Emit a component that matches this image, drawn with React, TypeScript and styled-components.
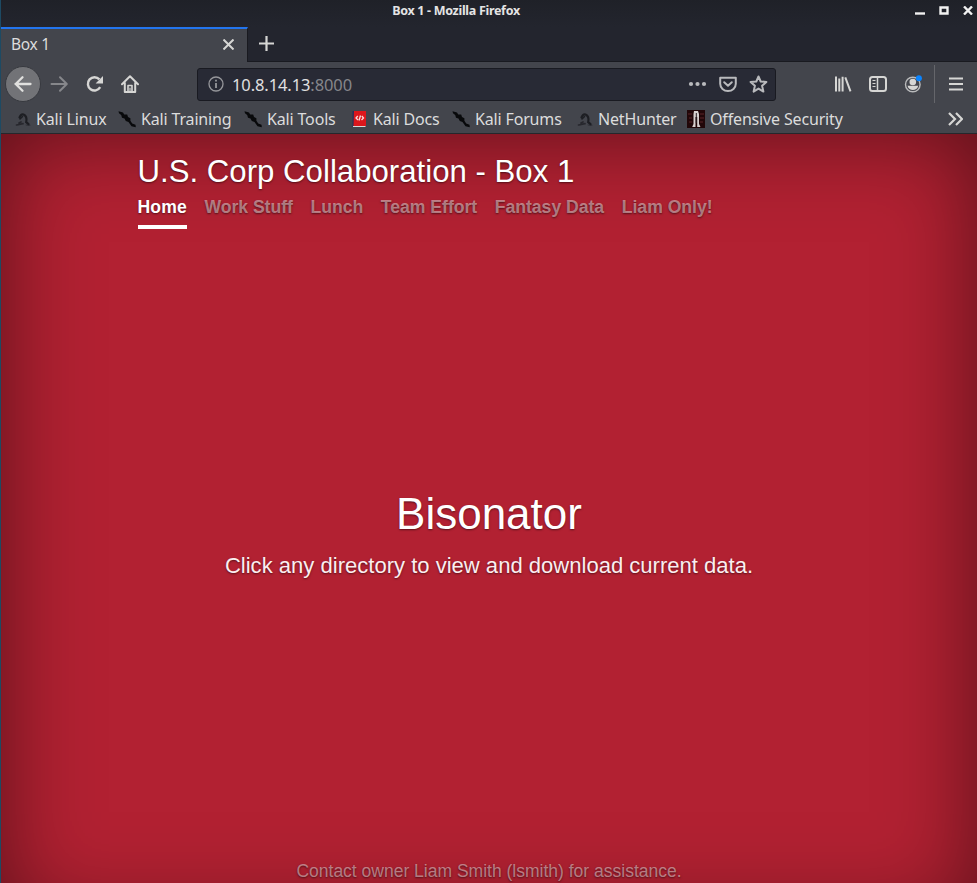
import React from "react";
import styled, { createGlobalStyle } from "styled-components";

const GlobalStyle = createGlobalStyle`
  * { box-sizing: border-box; }
  html, body { margin: 0; height: 883px; overflow: hidden; background: #23252e; }
  svg { display: block; flex: none; }
`;

const Window = styled.div`
  width: 977px;
  height: 883px;
  display: flex;
  flex-direction: column;
  overflow: hidden;
  border-left: 1px solid #1d4a63;
  background: #43454c;
  font-family: "Noto Sans", sans-serif;
  color: #dcdcdc;
`;

const TitleBar = styled.header`
  flex: none;
  height: 27px;
  display: grid;
  grid-template-columns: 1fr auto 1fr;
  background: linear-gradient(#1f2128, #23252e);
`;

const WindowTitle = styled.div`
  grid-column: 2;
  margin-left: -66px;
  font-size: 12.5px;
  line-height: 21px;
  font-weight: 700;
  letter-spacing: -0.3px;
  color: #e4e4e4;
`;

const WindowButtons = styled.div`
  display: flex;
  justify-content: flex-end;
  align-items: flex-start;
  padding: 6px 4px 0 0;
  gap: 14px;
`;

const TabStrip = styled.div`
  flex: none;
  height: 35px;
  display: flex;
  background: #23252e;
`;

const Tab = styled.div`
  width: 247px;
  height: 35px;
  display: flex;
  align-items: center;
  justify-content: space-between;
  padding: 0 13px 2px 10px;
  border-top: 2px solid #2375ee;
  border-right: 1px solid #191a20;
  background: #43454c;
  font-size: 15.5px;
  letter-spacing: -0.3px;
`;

const TabLabel = styled.span`
  margin-top: -2px;
`;

const NewTab = styled.div`
  flex: 1;
  padding: 8px 0 0 10px;
  border-bottom: 1px solid #191a20;
`;

const Toolbar = styled.div`
  flex: none;
  height: 44px;
  display: flex;
  align-items: center;
`;

const BackButton = styled.div`
  width: 36px;
  height: 36px;
  margin-left: 4px;
  display: flex;
  align-items: center;
  justify-content: center;
  border: 1px solid #37393f;
  border-radius: 50%;
  background: #727377;
`;

const NavIcons = styled.div`
  width: 156px;
  padding-left: 9px;
  display: flex;
  gap: 17px;
`;

const UrlBar = styled.div`
  width: 579px;
  height: 33px;
  display: flex;
  align-items: center;
  padding: 0 7px 0 10px;
  border: 1px solid #191a21;
  border-radius: 3px;
  background: #282a35;
`;

const Address = styled.div`
  flex: 1;
  padding-left: 8px;
  font-size: 16.5px;
  letter-spacing: -0.1px;
  color: #e0e0e0;
`;

const Port = styled.span`
  color: #85868b;
`;

const UrlActions = styled.div`
  display: flex;
  align-items: center;
  gap: 12px;
`;

const ToolIcons = styled.div`
  flex: 1;
  display: flex;
  align-items: center;
  justify-content: flex-end;
  gap: 17px;
  padding-right: 14px;
`;

const MenuButton = styled.div`
  height: 38px;
  display: flex;
  align-items: center;
  padding-left: 14px;
  margin-left: -5px;
  border-left: 1px solid #65666b;
`;

const Bookmarks = styled.nav`
  flex: none;
  height: 28px;
  display: flex;
  align-items: center;
  padding: 0 14px 2px 13px;
  border-bottom: 1px solid #26272c;
`;

const Bookmark = styled.div<{ $width: number }>`
  flex: none;
  width: ${(p) => p.$width}px;
  display: flex;
  align-items: center;
  gap: 5px;
  font-size: 16px;
  line-height: 24px;
  letter-spacing: -0.16px;
  white-space: nowrap;
`;

const Overflow = styled.div`
  margin-left: auto;
`;

const Page = styled.main`
  flex: none;
  height: 786px;
  display: flex;
  flex-direction: column;
  align-items: center;
  background: #b22132;
  box-shadow: inset 0 0 90px rgba(0, 0, 0, 0.5);
  text-shadow: 0 1px 2px rgba(0, 0, 0, 0.5);
  font-family: "Liberation Sans", Arial, sans-serif;
  color: #fff;
`;

const Masthead = styled.header`
  width: 703px;
  height: 96px;
  padding-top: 19px;
`;

const SiteTitle = styled.h3`
  margin: 0;
  font-size: 31.2px;
  line-height: 38px;
  font-weight: 400;
`;

const SiteNav = styled.nav`
  display: flex;
  gap: 17.6px;
`;

const NavLink = styled.a<{ $active?: boolean }>`
  height: 38px;
  padding-top: 5px;
  font-size: 17.6px;
  line-height: 22px;
  font-weight: 700;
  letter-spacing: ${(p) => (p.$active ? "0.1px" : "-0.01px")};
  white-space: nowrap;
  color: ${(p) => (p.$active ? "#fff" : "rgba(255,255,255,0.45)")};
  border-bottom: 4px solid ${(p) => (p.$active ? "#fff" : "transparent")};
`;

const Cover = styled.section`
  margin-top: 257px;
  height: 370px;
  text-align: center;
`;

const CoverTitle = styled.h1`
  margin: 0;
  font-size: 44px;
  line-height: 54px;
  font-weight: 400;
`;

const Lead = styled.p`
  margin: 8px 0 0;
  font-size: 22.05px;
  line-height: 34px;
  color: #fbeef0;
`;

const Footer = styled.footer`
  font-size: 17.5px;
  line-height: 28px;
  color: rgba(255, 255, 255, 0.45);
`;

const stroke = { fill: "none", stroke: "#d6d6d4", strokeWidth: 2 } as const;

const Arrow = ({ dim = false }: { dim?: boolean }) => (
  <svg width="19" height="18" viewBox="0 0 19 18" {...stroke} stroke={dim ? "#86878b" : "#e0e0de"} strokeLinecap="round" strokeLinejoin="round">
    {dim ? <path d="M1.5 9h15M10 2.2 16.8 9 10 15.8" /> : <path d="M16.5 9h-15M8.500 2.2 1.700 9l6.800 6.8" strokeWidth="2.3" />}
  </svg>
);

const Reload = () => (
  <svg width="18" height="18" viewBox="0 0 18 18" {...stroke} strokeWidth="2.4">
    <path d="M14.2 12.2A6.6 6.6 0 1 1 13.4 4.4" />
    <path d="M17 1v7.5H9.6Z" fill="#d6d6d4" stroke="none" />
  </svg>
);

const Home = () => (
  <svg width="18" height="18" viewBox="0 0 18 18" {...stroke} strokeLinecap="round" strokeLinejoin="round">
    <path d="M1 9.2 9 1.3l8 7.9M3.8 8v9h10.4V8" />
    <path d="M7 16v-5.5h4V16" strokeWidth="1.6" />
    <path d="M9 13v3" strokeWidth="1.2" />
  </svg>
);

const Info = () => (
  <svg width="16" height="16" viewBox="0 0 16 16" {...stroke} stroke="#96979b" strokeWidth="1.3">
    <circle cx="8" cy="8" r="7" />
    <path d="M8 7v5M8 3.8v1.8" strokeWidth="1.8" />
  </svg>
);

const Dots = () => (
  <svg width="19" height="6" viewBox="0 0 19 6" fill="#b9babd">
    <circle cx="3" cy="3" r="2.1" />
    <circle cx="9.5" cy="3" r="2.1" />
    <circle cx="16" cy="3" r="2.1" />
  </svg>
);

const Pocket = () => (
  <svg width="18" height="17" viewBox="0 0 18 17" {...stroke} stroke="#b9babd" strokeLinejoin="round" strokeLinecap="round">
    <path d="M1.2 1.7h15.6v6.1a7.8 7.3 0 0 1-15.6 0Z" />
    <path d="m5.2 6.3 3.8 3.5 3.8-3.5" />
  </svg>
);

const Star = () => (
  <svg width="19" height="18" viewBox="0 0 19 18" {...stroke} stroke="#b9babd" strokeLinejoin="round">
    <path d="m9.5 1.5 2.2 5 5.7.5-4.3 3.8 1.3 5.8-4.9-3-4.9 3 1.3-5.8L1.6 7l5.7-.5Z" />
  </svg>
);

const Library = () => (
  <svg width="18" height="16" viewBox="0 0 18 16" {...stroke} strokeWidth="2">
    <path d="M2 .5v15M5.3 2.5v13M8.6 .8v14.7M11.3 1.4l5.2 14" />
  </svg>
);

const Sidebar = () => (
  <svg width="18" height="16" viewBox="0 0 18 16" {...stroke}>
    <rect x="1" y="1" width="16" height="14" rx="2.5" />
    <path d="M8.5 1v14" strokeWidth="1.5" />
    <path d="M3.5 4.5h3M3.5 7.5h3M3.5 10.5h3" strokeWidth="1.2" />
  </svg>
);

const Account = () => (
  <svg width="18" height="18" viewBox="0 0 18 18">
    <circle cx="8.8" cy="9.5" r="7.3" fill="none" stroke="#b9babb" strokeWidth="1.4" />
    <circle cx="8.8" cy="7" r="3.3" fill="#d6d6d4" />
    <path d="M3.500 10.800h10.800c-.8 3-2.900 4.200-5.400 4.200S4.300 13.800 3.500 10.800Z" fill="#d6d6d4" />
    <circle cx="14.9" cy="3.2" r="3" fill="#0a84ff" />
  </svg>
);

const Menu = () => (
  <svg width="14" height="14" viewBox="0 0 14 14" {...stroke} strokeWidth="2.1">
    <path d="M0 1.500h14M0 7h14M0 12.500h14" />
  </svg>
);

const Chevrons = () => (
  <svg width="15" height="14" viewBox="0 0 15 14" {...stroke} strokeWidth="2.2">
    <path d="m1 1 6 6-6 6M8 1l6 6-6 6" />
  </svg>
);

const Dragon = () => (
  <svg width="17" height="17" viewBox="0 0 17 17" fill="none" stroke="#1d1e23" strokeLinecap="round">
    <path d="M5.500 7.500C6.500 5 8 4 9.500 4.500c2.300 1 3.500 4 2.700 7.700l2.300 2" strokeWidth="2.200" />
    <path d="M6 9 8.500 6.500" strokeWidth="1.500" />
    <path d="M2.500 15c3-.2 4.500-1.300 6.500-1.300M5 13l2-1" strokeWidth="1.700" opacity=".75" />
    <path d="M12 15c1.500.5 3 .5 4 .3" strokeWidth="1" opacity=".5" />
  </svg>
);

const Blade = () => (
  <svg width="18" height="18" viewBox="0 0 18 18" fill="#08090b">
    <path d="M.5 1.300 5 2.600l1.200 1.800 3 .2.800 2.400 2.400 1.200v2.600l1.800 2.600 3.300 1.400.3 2.400-4.300-1-3-4.200-2.700-.9L6.500 8.600 4 7.800 3.200 5 1 3.200Z" />
  </svg>
);

const Book = () => (
  <svg width="17" height="18" viewBox="0 0 17 18">
    <path d="M1.500 1h2v16h-2Z" fill="#24305c" />
    <path d="M3 1h12v15H2.500Z" fill="#dc171c" />
    <path d="M2 16.500h12.500" stroke="#d8d8d8" />
    <path d="m6.800 6-1.800 2 2 2M10.800 6l1.700 2-2 2M9.500 5.500 8 10.500" fill="none" stroke="#f7dcdc" strokeWidth="1.300" />
  </svg>
);

const Offensive = () => (
  <svg width="18" height="18" viewBox="0 0 18 18">
    <path d="M0 0h18v18H0Z" fill="#210709" />
    <path d="M1 4h4M2 8h3M2 12h3M13 4h4M13 8h4M13 12h3" stroke="#5a2428" strokeWidth="1.200" />
    <path d="M7 1h4l1 3v10l1.500 3H10.200V7H8.500v10H5.200l1.300-3V4Z" fill="#d8d1d0" />
    <path d="M9.300 3v10" stroke="#292023" />
  </svg>
);

const bookmarks = [
  { label: "Kali Linux", icon: <Dragon />, width: 104 },
  { label: "Kali Training", icon: <Blade />, width: 126 },
  { label: "Kali Tools", icon: <Blade />, width: 107 },
  { label: "Kali Docs", icon: <Book />, width: 101 },
  { label: "Kali Forums", icon: <Blade />, width: 124 },
  { label: "NetHunter", icon: <Dragon />, width: 111 },
  { label: "Offensive Security", icon: <Offensive />, width: 160 },
];

const links = ["Home", "Work Stuff", "Lunch", "Team Effort", "Fantasy Data", "Liam Only!"];

export default function App() {
  return (
    <>
      <GlobalStyle />
      <Window>
        <TitleBar>
          <WindowTitle>Box 1 - Mozilla Firefox</WindowTitle>
          <WindowButtons>
            <svg width="10" height="9" viewBox="0 0 10 9"><path d="M0 7.500h10" stroke="#f1f1f1" strokeWidth="2.400" /></svg>
            <svg width="10" height="9" viewBox="0 0 10 9"><path d="M1.500 1.500h7v6h-7Z" fill="none" stroke="#f1f1f1" strokeWidth="2.400" /></svg>
            <svg width="10" height="9" viewBox="0 0 10 9"><path d="m1 .5 8 8M9 .5l-8 8" stroke="#f1f1f1" strokeWidth="2.400" /></svg>
          </WindowButtons>
        </TitleBar>
        <TabStrip>
          <Tab>
            <TabLabel>Box 1</TabLabel>
            <svg width="11" height="11" viewBox="0 0 11 11" {...stroke}><path d="m.5 .5 10 10M10.500 .5l-10 10" /></svg>
          </Tab>
          <NewTab>
            <svg width="17" height="17" viewBox="0 0 17 17" {...stroke} strokeWidth="2.200"><path d="M8.500 1v15M1 8.500h15" /></svg>
          </NewTab>
        </TabStrip>
        <Toolbar>
          <BackButton><Arrow /></BackButton>
          <NavIcons><Arrow dim /><Reload /><Home /></NavIcons>
          <UrlBar>
            <Info />
            <Address>10.8.14.13<Port>:8000</Port></Address>
            <UrlActions><Dots /><Pocket /><Star /></UrlActions>
          </UrlBar>
          <ToolIcons>
            <Library /><Sidebar /><Account />
            <MenuButton><Menu /></MenuButton>
          </ToolIcons>
        </Toolbar>
        <Bookmarks>
          {bookmarks.map((b) => (
            <Bookmark key={b.label} $width={b.width}>
              {b.icon}
              <span>{b.label}</span>
            </Bookmark>
          ))}
          <Overflow><Chevrons /></Overflow>
        </Bookmarks>
        <Page>
          <Masthead>
            <SiteTitle>U.S. Corp Collaboration - Box 1</SiteTitle>
            <SiteNav>
              {links.map((l, i) => (
                <NavLink key={l} $active={i === 0}>{l}</NavLink>
              ))}
            </SiteNav>
          </Masthead>
          <Cover>
            <CoverTitle>Bisonator</CoverTitle>
            <Lead>Click any directory to view and download current data.</Lead>
          </Cover>
          <Footer>Contact owner Liam Smith (lsmith) for assistance.</Footer>
        </Page>
      </Window>
    </>
  );
}
